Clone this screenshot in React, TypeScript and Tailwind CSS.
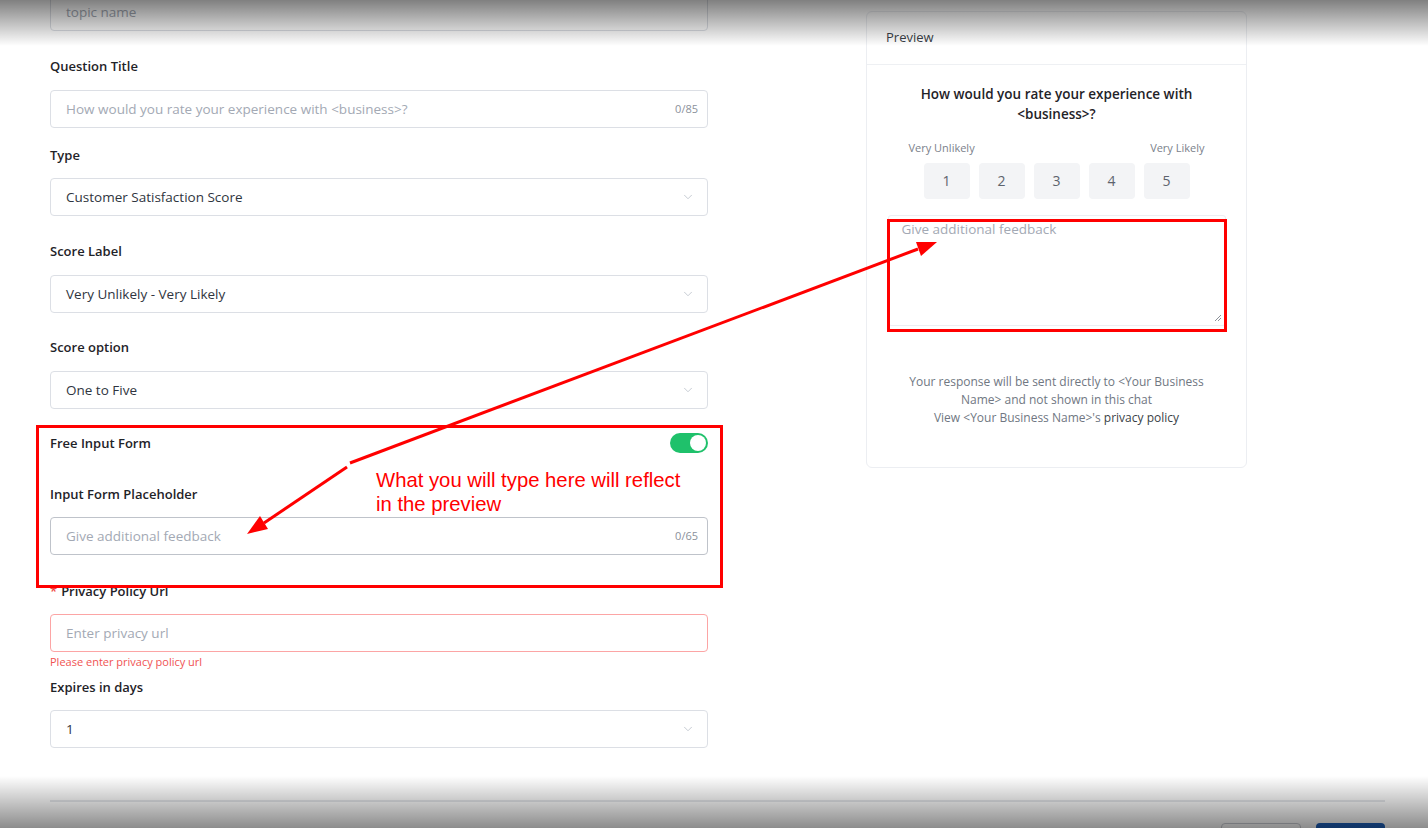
import React from 'react';
import { ChevronDown } from 'lucide-react';

type Field = {
  label: string;
  kind: 'input' | 'select';
  value?: string;
  placeholder?: string;
  counter?: string;
  labelGap: string;
  gap: string;
};

const fields: Field[] = [
  { label: 'Question Title', kind: 'input', placeholder: 'How would you rate your experience with <business>?', counter: '0/85', labelGap: 'mt-[14px]', gap: 'mb-[17px]' },
  { label: 'Type', kind: 'select', value: 'Customer Satisfaction Score', labelGap: 'mt-[13px]', gap: 'mb-[25px]' },
  { label: 'Score Label', kind: 'select', value: 'Very Unlikely - Very Likely', labelGap: 'mt-[14px]', gap: 'mb-[24px]' },
  { label: 'Score option', kind: 'select', value: 'One to Five', labelGap: 'mt-[14px]', gap: 'mb-[24px]' },
];

function Label({ text, required }: { text: string; required?: boolean }) {
  return (
    <div className="h-5 leading-5 text-[13px] font-semibold text-[#1f2328]">
      {required && <span className="text-[#ef4444] mr-1">*</span>}
      {text}
    </div>
  );
}

function Box({ field }: { field: Field }) {
  if (field.kind === 'select') {
    return (
      <div className="h-[38px] border border-[#dcdfe5] rounded-[4px] flex items-center justify-between pl-[15px] pr-[12px] bg-white">
        <span className="text-[13.5px] text-[#2f3540]">{field.value}</span>
        <ChevronDown className="w-[14px] h-[14px] text-[#b5bbc5]" strokeWidth={1.3} />
      </div>
    );
  }
  return (
    <div className="h-[38px] border border-[#dcdfe5] rounded-[4px] flex items-center justify-between pl-[15px] pr-[9px] bg-white">
      <span className="text-[13.5px] text-[#a3a9b4]">{field.placeholder}</span>
      <span className="text-[11px] text-[#8b919b]">{field.counter}</span>
    </div>
  );
}

function Toggle() {
  return (
    <div className="w-[38px] h-[20px] rounded-full bg-[#1fc16b] flex items-center justify-end pr-[2px]">
      <div className="w-[16px] h-[16px] rounded-full bg-white" />
    </div>
  );
}

function Preview() {
  return (
    <div className="w-[381px] h-[457px] mt-[11px] border border-[#eceef2] rounded-[6px] bg-white">
      <div className="h-[53px] border-b border-[#eef0f3] flex items-center px-[19px] text-[13px] text-[#3a3f47]">
        Preview
      </div>
      <div className="flex flex-col items-center px-[20px]">
        <p className="mt-[19px] w-[290px] text-center text-[13.5px] leading-5 font-semibold text-[#1f2328]">
          How would you rate your experience with &lt;business&gt;?
        </p>
        <div className="mt-[16px] w-[296px] flex justify-between text-[11px] text-[#7b818b]">
          <span>Very Unlikely</span>
          <span>Very Likely</span>
        </div>
        <div className="mt-[6px] flex gap-[9px]">
          {[1, 2, 3, 4, 5].map((n) => (
            <div key={n} className="w-[46px] h-[36px] rounded-[4px] bg-[#f3f4f6] flex items-center justify-center text-[14px] text-[#5d636d]">
              {n}
            </div>
          ))}
        </div>
        <div className="relative mt-[16px] w-[338px] h-[111px] border border-[#eceef2] rounded-[3px] px-[13px] pt-[3px] text-[13.5px] text-[#a3a9b4]">
          Give additional feedback
          <svg className="absolute right-[3px] bottom-[3px]" width="8" height="8" viewBox="0 0 8 8">
            <path d="M7 1 L1 7 M7 4 L4 7" stroke="#8d9199" strokeWidth="1" />
          </svg>
        </div>
        <p className="mt-[47px] w-[300px] text-center text-[12px] leading-[18px] text-[#707782]">
          Your response will be sent directly to &lt;Your Business Name&gt; and not shown in this chat
          <br />
          View &lt;Your Business Name&gt;'s <span className="text-[#3a3f47]">privacy policy</span>
        </p>
      </div>
    </div>
  );
}

export default function App() {
  return (
    <div className="relative w-[1428px] h-[828px] overflow-hidden bg-white font-['Open_Sans',sans-serif]">
      <div className="flex pl-[50px] gap-[158px]">
        <div className="w-[658px] -mt-[7px]">
          <div className="h-[38px] border border-[#dcdfe5] rounded-[4px] flex items-center pl-[15px] text-[13.5px] text-[#a3a9b4] mb-[25px]">
            topic name
          </div>
          {fields.map((f) => (
            <div key={f.label} className={f.gap}>
              <Label text={f.label} />
              <div className={f.labelGap}>
                <Box field={f} />
              </div>
            </div>
          ))}
          <div className="flex items-center justify-between h-5">
            <Label text="Free Input Form" />
            <Toggle />
          </div>
          <div className="mt-[31px]">
            <Label text="Input Form Placeholder" />
            <div className="mt-[13px] h-[38px] border border-[#bfc3ca] rounded-[4px] flex items-center justify-between pl-[15px] pr-[9px]">
              <span className="text-[13.5px] text-[#a3a9b4]">Give additional feedback</span>
              <span className="text-[11px] text-[#8b919b]">0/65</span>
            </div>
          </div>
          <div className="mt-[26px]">
            <Label text="Privacy Policy Url" required />
            <div className="mt-[13px] h-[38px] border border-[#fca5a5] rounded-[4px] flex items-center pl-[15px] text-[13.5px] text-[#a3a9b4]">
              Enter privacy url
            </div>
            <div className="h-[20px] leading-[20px] text-[11px] text-[#f05252]">Please enter privacy policy url</div>
          </div>
          <div className="mt-[5px]">
            <Label text="Expires in days" />
            <div className="mt-[13px]">
              <Box field={{ label: 'Expires in days', kind: 'select', value: '1', labelGap: '', gap: '' }} />
            </div>
          </div>
        </div>
        <Preview />
      </div>

      <div className="ml-[50px] w-[1335px] mt-[52px] border-t-2 border-[#e6e8ec] flex justify-end gap-[15px] pt-[21px]">
        <div className="w-[80px] h-[32px] rounded-[4px] border border-[#c9ccd2] bg-white" />
        <div className="w-[69px] h-[32px] rounded-[4px] bg-[#1d5fb8]" />
      </div>

      {/* modal edge shading */}
      <div className="pointer-events-none absolute top-0 left-0 right-0 h-[46px] bg-gradient-to-b from-black/50 to-transparent" />
      <div className="pointer-events-none absolute bottom-0 left-0 right-0 h-[52px] bg-gradient-to-t from-black/45 to-transparent" />

      {/* annotations */}
      <div className="pointer-events-none absolute left-[36px] top-[425px] w-[687px] h-[163px] border-[3px] border-[#ff0000]" />
      <div className="pointer-events-none absolute left-[887px] top-[219px] w-[340px] h-[113px] border-[3px] border-[#ff0000]" />
      <div className="pointer-events-none absolute left-[376px] top-[468px] text-[20.3px] leading-[24px] text-[#ff0000] font-['Liberation_Sans',Arial,sans-serif]">
        What you will type here will reflect
        <br />
        in the preview
      </div>
      <svg className="pointer-events-none absolute inset-0" width="1428" height="828" viewBox="0 0 1428 828">
        <path d="M350 463 L918 249" stroke="#ff0000" strokeWidth="3" fill="none" />
        <path d="M347 467 L264 523" stroke="#ff0000" strokeWidth="3" fill="none" />
        <polygon points="937,242 921,256 916,242" fill="#ff0000" />
        <polygon points="247,534 268,529 260,516" fill="#ff0000" />
      </svg>
    </div>
  );
}
